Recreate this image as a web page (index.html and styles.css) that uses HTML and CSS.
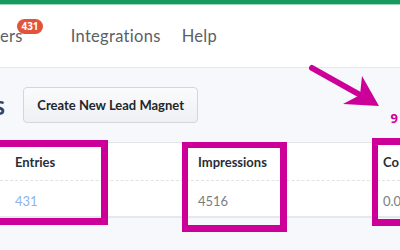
FILE: index.html
```html
<!DOCTYPE html>
<html>
<head>
<meta charset="utf-8">
<link rel="stylesheet" href="styles.css">
</head>
<body>
<div class="topbar"></div>
<nav class="nav">
  <div class="nav-item has-badge">ers<span class="badge">431</span></div>
  <div class="nav-item">Integrations</div>
  <div class="nav-item">Help</div>
</nav>
<header class="header">
  <h1 class="title">s</h1>
  <button class="btn">Create New Lead Magnet</button>
  <span class="note">9</span>
</header>
<section class="card">
  <div class="row head">
    <div class="cell">Entries</div>
    <div class="cell">Impressions</div>
    <div class="cell">Co</div>
  </div>
  <div class="row body">
    <div class="cell link">431</div>
    <div class="cell muted">4516</div>
    <div class="cell muted">0.0%</div>
  </div>
</section>
<div class="hl hl-1"></div>
<div class="hl hl-2"></div>
<div class="hl hl-3"></div>
<svg class="arrow" width="400" height="250" viewBox="0 0 400 250">
  <line x1="312" y1="68" x2="362" y2="96" stroke="#cc0099" stroke-width="6" stroke-linecap="round"/>
  <polygon points="379,106 362,76 360,95 343,104" fill="#cc0099"/>
</svg>
</body>
</html>
```
FILE: styles.css
```css
* { box-sizing: border-box; }
html, body {
  margin: 0;
  padding: 0;
}
body {
  width: 400px;
  height: 250px;
  overflow: hidden;
  background: #f7f8fb;
  position: relative;
  font-family: "Open Sans", "Noto Sans", sans-serif;
}
.topbar {
  height: 5px;
  background: #179a5e;
  border-bottom: 1px solid #9fd8b9;
}
.nav {
  height: 63px;
  background: #fff;
  border-bottom: 1px solid #e4e7ee;
  display: flex;
  align-items: center;
  gap: 21px;
  font-family: "Lato", "Open Sans", sans-serif;
  font-size: 16.5px;
  color: #5b5f66;
  letter-spacing: 0.3px;
}
.nav-item { position: relative; }
.has-badge { padding-right: 27px; }
.badge {
  position: absolute;
  left: 17px;
  top: -7px;
  width: 26px;
  height: 15px;
  border-radius: 8px;
  background: #e2533e;
  color: #fff;
  font-family: "Open Sans", sans-serif;
  font-size: 10px;
  font-weight: 700;
  line-height: 15px;
  text-align: center;
  letter-spacing: 0;
}
.header {
  height: 74px;
  display: flex;
  align-items: center;
}
.title {
  margin: 0 0 0 -7px;
  font-size: 25px;
  font-weight: 600;
  color: #2f4468;
}
.btn {
  margin-left: 18px;
  height: 36px;
  width: 175px;
  padding: 0;
  border: 1px solid #d3d6db;
  border-radius: 4px;
  background: linear-gradient(#fbfbfc, #eef0f3);
  font-family: "Lato", sans-serif;
  font-size: 13px;
  font-weight: 700;
  color: #23262b;
}
.note {
  margin-left: auto;
  margin-right: 2px;
  align-self: flex-end;
  margin-bottom: 15px;
  color: #cc0099;
  font-weight: 700;
  font-size: 13px;
}
.card {
  background: #fff;
  border-top: 1px solid #e2e5eb;
  border-bottom: 2px solid #e6e8ee;
  height: 76px;
  font-family: "Lato", sans-serif;
  font-size: 13px;
}
.row {
  display: grid;
  grid-template-columns: 184px 184px 184px;
}
.head {
  height: 38px;
  align-items: center;
  border-bottom: 1px dashed #dfe2e7;
  color: #2a2e36;
  font-weight: 700;
}
.body {
  height: 36px;
  align-items: center;
  padding-top: 3px;
}
.cell { padding-left: 15px; white-space: nowrap; }
.cell:nth-child(2) { padding-left: 14px; }
.link { color: #8fb3ec; }
.muted { color: #7a7d82; }
.hl {
  position: absolute;
  border: 7px solid #cc0099;
}
.hl-1 { left: -10px; top: 140px; width: 118px; height: 85px; }
.hl-2 { left: 182px; top: 142px; width: 105px; height: 90px; border-width: 6px 7px 7px 6px; }
.hl-3 { left: 372px; top: 138px; width: 40px; height: 88px; border-width: 7px 7px 7px 6px; }
.arrow {
  position: absolute;
  left: 0;
  top: 0;
  pointer-events: none;
}
```
